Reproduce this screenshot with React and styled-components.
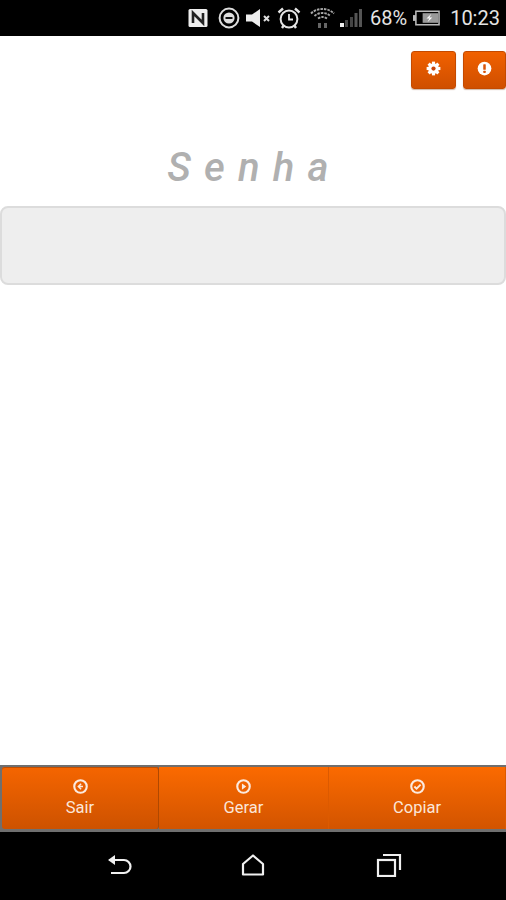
import React from "react";
import styled, { createGlobalStyle } from "styled-components";

const Global = createGlobalStyle`
  html, body { margin: 0; padding: 0; background: #fff; }
  * { box-sizing: border-box; }
`;
const Screen = styled.div`
  width: 506px; height: 900px; display: flex; flex-direction: column; overflow: hidden;
  font-family: Roboto, "Liberation Sans", sans-serif; background: #fff;
`;
const StatusBar = styled.div`
  height: 36px; flex: none; background: #000; color: #e8e8e8; display: flex; align-items: center;
  padding: 0 7px 0 188px;
`;
const StatusIcon = styled.svg`
  display: block; flex: none; margin-right: ${p => p.$gap}px;
`;
const StatusText = styled.span`
  font-size: 20px; line-height: 36px; color: #e4e4e4; margin-right: ${p => p.$gap || 0}px; white-space: nowrap;
`;
const Main = styled.main`
  flex: 1; display: flex; flex-direction: column; min-height: 0;
`;
const TopActions = styled.div`
  display: flex; justify-content: flex-end; gap: 7px; padding-top: 15px;
`;
const SmallButton = styled.button`
  width: ${p => p.$w}px; height: 38px; padding: 0 0 4px; border: 1px solid #c44a00; border-radius: 3px;
  display: flex; align-items: center; justify-content: center;
  background: linear-gradient(#f16100, #cf4f00);
  box-shadow: 0 1px 1px rgba(120,50,0,.35);
`;
const Title = styled.h1`
  margin: 56px 0 0; height: 64px; text-align: center; padding-left: 3px;
  font: italic 500 40px/46px Roboto, sans-serif; letter-spacing: 13.2px; color: #b0b0b0;
`;
const PasswordBox = styled.div`
  height: 79px; margin-top: -3px; background: #eeeeee; border: 2px solid #dcdcdc; border-radius: 8px;
`;
const Footer = styled.footer`
  height: 67px; flex: none; display: grid; grid-template-columns: 159px 170px 177px;
  background: #6f6f6f; padding: 2px 0 3px;
`;
const FooterButton = styled.button`
  border: 0; color: #fbe6d8; display: flex; flex-direction: column; align-items: center; justify-content: flex-start;
  padding: 12px 0 0; font: 400 16.500px/20px Roboto, sans-serif;
  background: ${p => p.$active ? "linear-gradient(#f56500, #cd5200)" : "linear-gradient(#fb6a00, #d25400)"};
  margin-left: ${p => p.$active ? 2 : 0}px;
  border-right: 1px solid ${p => p.$active ? "#b04800" : "#dc5a00"};
  border-radius: ${p => p.$active ? 3 : 0}px;
  box-shadow: ${p => p.$active ? "inset 0 1px 0 #c24e00" : "none"};
`;
const FooterIcon = styled.svg`
  display: block; margin-bottom: 4px;
`;
const NavBar = styled.nav`
  height: 68px; flex: none; background: #000; display: grid; grid-template-columns: 120px 148px 124px; padding: 0 0 0 59px; align-items: center;
`;
const NavSlot = styled.div`
  display: flex; justify-content: center; padding-bottom: 2px;
`;

const Gear = () => (
  <svg width="15" height="15" viewBox="0 0 24 24">
    <g fill="#fff">
      <circle cx="12" cy="12" r="8.5" />
      {[0, 45, 90, 135, 180, 225, 270, 315].map(a => (
        <rect key={a} x="9.5" y="1" width="5" height="5" transform={`rotate(${a} 12 12)`} />
      ))}
    </g>
    <circle cx="12" cy="12" r="3.4" fill="#c9440a" />
  </svg>
);
const Alert = () => (
  <svg width="15" height="15" viewBox="0 0 24 24">
    <circle cx="12" cy="12" r="11" fill="#fff" />
    <rect x="10" y="5" width="4" height="9" rx="1" fill="#d9540a" />
    <rect x="10" y="15.5" width="4" height="3.5" rx="1" fill="#d9540a" />
  </svg>
);
const Ring = ({ children }) => (
  <FooterIcon width="15" height="15" viewBox="0 0 24 24">
    <circle cx="12" cy="12" r="10" fill="none" stroke="#fbeadf" strokeWidth="3.4" />
    {children}
  </FooterIcon>
);

export default function App() {
  return (
    <Screen>
      <Global />
      <StatusBar>
        <StatusIcon $gap={10} width="20" height="20" viewBox="0 0 20 20">
          <rect x="0.5" y="1" width="19" height="18" rx="1.5" fill="#eee" />
          <path d="M5 15V5l10 10V5" fill="none" stroke="#222" strokeWidth="2.6" />
        </StatusIcon>
        <StatusIcon $gap={6} width="22" height="22" viewBox="0 0 22 22">
          <circle cx="11" cy="11" r="9.4" fill="none" stroke="#ddd" strokeWidth="2" />
          <circle cx="11" cy="11" r="5.6" fill="#ddd" />
          <rect x="7.5" y="10" width="7" height="2" fill="#111" />
        </StatusIcon>
        <StatusIcon $gap={5} width="26" height="20" viewBox="0 0 26 20">
          <path d="M0 6.500h6L14 1v18l-8-5.500H0z" fill="#eee" />
          <path d="M18 8l5 5M23 8l-5 5" stroke="#ddd" strokeWidth="2" />
        </StatusIcon>
        <StatusIcon $gap={9} width="24" height="24" viewBox="0 0 24 24">
          <circle cx="12" cy="13" r="8.400" fill="none" stroke="#e4e4e4" strokeWidth="2" />
          <path d="M12 8v5.500h4" fill="none" stroke="#e4e4e4" strokeWidth="1.800" />
          <path d="M1.500 6.500L6 2.500M22.500 6.500L18 2.500M5 22l2-3M19 22l-2-3" stroke="#e4e4e4" strokeWidth="2.400" />
        </StatusIcon>
        <StatusIcon $gap={5} width="25" height="24" viewBox="0 0 25 24">
          <g fill="none" stroke="#a8a8a8" strokeWidth="1.900" strokeDasharray="2.500 1">
            <path d="M1 7.500C7 1.500 18 1.500 24 7.500" />
            <path d="M4.500 10C9 6 16 6 20.500 10" />
            <path d="M8 12.500c3-2 6-2 9 0" />
          </g>
          <g fill="#666">
            <rect x="8" y="17" width="3" height="5" />
            <rect x="14" y="17" width="3" height="5" />
          </g>
        </StatusIcon>
        <StatusIcon $gap={8} width="22" height="20" viewBox="0 0 22 20">
          <rect x="0" y="15" width="4" height="4" fill="#eee" />
          <rect x="5" y="12" width="3" height="7" fill="#444" />
          <rect x="10" y="9" width="3" height="10" fill="#444" />
          <rect x="14.500" y="5" width="3" height="14" fill="#555" />
          <rect x="19" y="1" width="3" height="18" fill="#555" />
        </StatusIcon>
        <StatusText $gap={6}>68%</StatusText>
        <StatusIcon $gap={10} width="27" height="20" viewBox="0 0 28 20">
          <rect x="3" y="3" width="24" height="14" fill="none" stroke="#bbb" strokeWidth="1.600" />
          <rect x="0" y="7" width="3" height="6" fill="#bbb" />
          <rect x="10" y="5" width="16" height="10" fill="#9a9a9a" />
          <path d="M19 5.500l-5 5h3l-2 4 5-5h-3z" fill="#fff" />
        </StatusIcon>
        <StatusText>10:23</StatusText>
      </StatusBar>
      <Main>
        <TopActions>
          <SmallButton $w={45}><Gear /></SmallButton>
          <SmallButton $w={43}><Alert /></SmallButton>
        </TopActions>
        <Title>Senha</Title>
        <PasswordBox />
      </Main>
      <Footer>
        <FooterButton $active>
          <Ring><path d="M13 7.500L8.500 12l4.500 4.500M9 12h7" fill="none" stroke="#fbeadf" strokeWidth="2.400" /></Ring>
          Sair
        </FooterButton>
        <FooterButton>
          <Ring><path d="M9.500 7l7 5-7 5z" fill="#fbeadf" /></Ring>
          Gerar
        </FooterButton>
        <FooterButton>
          <Ring><path d="M7 12l3.500 3.500L17 9" fill="none" stroke="#fbeadf" strokeWidth="3" /></Ring>
          Copiar
        </FooterButton>
      </Footer>
      <NavBar>
        <NavSlot>
          <svg width="26" height="24" viewBox="0 0 26 24" fill="none" stroke="#f0f0f0" strokeWidth="2.200">
            <path d="M3 7h15a6.500 6.500 0 0 1 0 13H5" />
            <path d="M9 2L2 7l7 5z" fill="#f0f0f0" stroke="none" />
          </svg>
        </NavSlot>
        <NavSlot>
          <svg width="24" height="22" viewBox="0 0 24 22" fill="none" stroke="#f0f0f0" strokeWidth="2.200">
            <path d="M2 20.500V10L12 1.500 22 10v10.500z" strokeLinejoin="round" />
          </svg>
        </NavSlot>
        <NavSlot>
          <svg width="26" height="24" viewBox="0 0 26 24" fill="none" stroke="#f0f0f0" strokeWidth="2.200">
            <rect x="2" y="7" width="17" height="16" />
            <path d="M7 2h17v15" />
          </svg>
        </NavSlot>
      </NavBar>
    </Screen>
  );
}
